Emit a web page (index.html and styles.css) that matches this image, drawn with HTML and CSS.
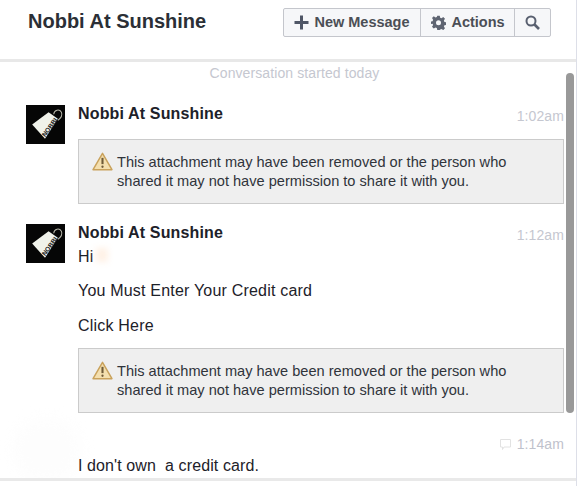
FILE: index.html
```html
<!DOCTYPE html>
<html lang="en">
<head>
<meta charset="utf-8">
<title>Nobbi At Sunshine</title>
<link rel="stylesheet" href="styles.css">
</head>
<body>
<svg class="defs" width="0" height="0" aria-hidden="true">
  <defs>
    <symbol id="avatar" viewBox="0 0 38 38">
      <rect width="38" height="38" fill="#060606"/>
      <path d="M6 19 L22 7 L31 13.500 L18.500 33 Z" fill="#f0f2ea"/>
      <path d="M27 9 C27.500 4.500 32.500 3.500 34.500 7 C35.500 9.500 34.500 12.500 31 15" fill="none" stroke="#b5b5a8" stroke-width="1"/>
      <text x="0" y="0" transform="translate(18.800 31.500) rotate(-54)" class="tag-text">NOBBI</text>
    </symbol>
    <symbol id="warn" viewBox="0 0 20 18">
      <path d="M10 1.200 L19 16.800 H1 Z" fill="#f4dfae" stroke="#c9a25c" stroke-width="1.400" stroke-linejoin="round"/>
      <path d="M10 5.500 V11.500" stroke="#6e5a38" stroke-width="2"/>
      <circle cx="10" cy="14" r="1.100" fill="#6e5a38"/>
    </symbol>
  </defs>
</svg>
<main class="panel">
  <header class="top">
    <h1 class="title">Nobbi At Sunshine</h1>
    <div class="btns">
      <button class="btn btn-new">
        <svg class="ic" width="15" height="15" viewBox="0 0 15 15"><path d="M6 0.500H9V6H14.500V9H9V14.500H6V9H0.500V6H6Z" fill="#4f5666"/></svg>
        New Message
      </button>
      <button class="btn btn-act">
        <svg class="ic" width="15" height="15" viewBox="0 0 24 24"><path fill="#5f6572" fill-rule="evenodd" d="M10 1h4l.7 3.200 2.100.9 2.800-1.800 2.800 2.800-1.800 2.800.9 2.100 3.200.7v4l-3.200.7-.9 2.100 1.800 2.800-2.800 2.800-2.800-1.800-2.100.9L14 24h-4l-.7-3.200-2.100-.9-2.800 1.800-2.800-2.800 1.800-2.800-.9-2.100L-.7 14.500v-4l3.200-.7.9-2.100L1.600 4.900l2.800-2.800 2.800 1.800 2.100-.9z M12 8.500a4 4 0 1 0 0 8 4 4 0 0 0 0-8z"/></svg>
        Actions
      </button>
      <button class="btn btn-search" aria-label="Search">
        <svg width="15" height="15" viewBox="0 0 15 15"><circle cx="6" cy="6" r="4.500" fill="none" stroke="#596070" stroke-width="2"/><path d="M9.500 9.500L14 14" stroke="#596070" stroke-width="2.600"/></svg>
      </button>
    </div>
  </header>

  <section class="thread">
    <p class="started">Conversation started today</p>

    <article class="msg msg-first">
      <svg class="avatar"><use href="#avatar"/></svg>
      <div class="body">
        <div class="head"><span class="name">Nobbi At Sunshine</span><time class="time">1:02am</time></div>
        <div class="notice notice-gap">
          <svg class="warn"><use href="#warn"/></svg>
          <p>This attachment may have been removed or the person who shared it may not have permission to share it with you.</p>
        </div>
      </div>
    </article>

    <article class="msg">
      <svg class="avatar"><use href="#avatar"/></svg>
      <div class="body">
        <div class="head"><span class="name">Nobbi At Sunshine</span><time class="time">1:12am</time></div>
        <p class="line line-hi">Hi<span class="smudge"></span></p>
        <p class="line">You Must Enter Your Credit card</p>
        <p class="line line-last">Click Here</p>
        <div class="notice">
          <svg class="warn"><use href="#warn"/></svg>
          <p>This attachment may have been removed or the person who shared it may not have permission to share it with you.</p>
        </div>
      </div>
    </article>

    <article class="msg">
      <div class="blob"></div>
      <div class="body body-third">
        <div class="head head-third">
          <span></span>
          <span class="seen">
            <svg width="13" height="13" viewBox="0 0 13 13"><path d="M1.500 1.500H11.500V9H5L3.500 11.500V9H1.500Z" fill="none" stroke="#e2e2e2" stroke-width="1"/></svg>
            <time class="time">1:14am</time>
          </span>
        </div>
        <p class="line line-third">I don't own&nbsp; a credit card.</p>
      </div>
    </article>
    <div class="scrollbar"></div>
  </section>
</main>
</body>
</html>
```

FILE: styles.css
```css
* { box-sizing: border-box; }
html, body { margin: 0; padding: 0; background: #fff; }
body { font-family: "Liberation Sans", Arial, sans-serif; color: #1d2129; height: 486px; overflow: hidden; }
.defs { display: block; height: 0; }
p { margin: 0; }

.panel { width: 577px; height: 486px; border-right: 1px solid #dddfe8; display: flex; flex-direction: column; }

.top { height: 62px; flex: none; border-bottom: 3px solid #e8e8e8; display: flex; justify-content: space-between; padding: 8px 25px 0 28px; }
.title { margin: 1px 0 0; font-size: 20px; line-height: 24px; font-weight: 700; color: #2b2f36; }

.btns { display: flex; height: 29px; border: 1px solid #c4c6cc; border-radius: 2px; background: #f6f7f9; }
.btn { font: 700 14.5px/1 "Liberation Sans", Arial, sans-serif; color: #4b4f56; background: transparent; border: 0; border-left: 1px solid #c4c6cc; padding: 0; display: flex; align-items: center; justify-content: center; gap: 5px; }
.btn-new { width: 136px; border-left: 0; }
.btn-act { width: 94px; padding-left: 1px; }
.btn-search { width: 36px; }

.thread { position: relative; height: 419px; flex: none; overflow: hidden; border-bottom: 3px solid #e9e9e9; }
.started { text-align: center; color: #c5c7d0; font-size: 14px; letter-spacing: .1px; line-height: 16px; padding-top: 3px; padding-left: 13px; }

.msg { display: flex; padding: 0 12px 0 26px; position: relative; margin-top: 20px; }
.msg-first { margin-top: 24px; }
.avatar { width: 39px; height: 39px; flex: none; }
.body { flex: 1; min-width: 0; margin-left: 13px; position: relative; }
.body-third { margin-left: 52px; }
.head { display: flex; justify-content: space-between; align-items: flex-start; height: 23px; }
.head-third { height: 24px; }
.name { font-size: 16px; line-height: 20px; font-weight: 700; color: #1d2129; letter-spacing: .15px; margin-top: -1px; }
.time { font-size: 14px; letter-spacing: .1px; line-height: 18px; color: #c5c7d0; margin-top: 2px; }
.seen { display: flex; align-items: center; gap: 5px; margin-top: 2px; }
.seen .time { margin-top: 0; color: #bfc2cc; }
.seen svg { margin-top: 1px; }

.line { font-size: 16px; letter-spacing: .2px; line-height: 18px; color: #1d2129; margin-bottom: 17px; position: relative; }
.line-hi { top: 1px; }
.line-last { margin-bottom: 13px; }
.line-third { letter-spacing: .1px; }
.smudge { position: absolute; left: 18px; top: 0; width: 12px; height: 14px; background: #fff1e6; filter: blur(3px); }

.notice { display: flex; gap: 4px; height: 65px; border: 1px solid #cbcbcb; background: #efefef; padding: 12px 30px 0 13px; width: 486px; }
.notice-gap { margin-top: 11px; }
.notice p { font-size: 14.6px; line-height: 19px; color: #30343b; margin-top: 1px; }
.warn { width: 21px; height: 19px; flex: none; }
.tag-text { font: 700 6.5px "Liberation Sans", Arial, sans-serif; fill: #1a1a1a; }

.blob { position: absolute; left: 12px; top: -14px; width: 70px; height: 62px; border-radius: 50%; background: #fdfdfd; filter: blur(7px); }
.scrollbar { position: absolute; top: 11px; left: 566px; width: 8px; height: 340px; border-radius: 4px; background: #999; }
```
